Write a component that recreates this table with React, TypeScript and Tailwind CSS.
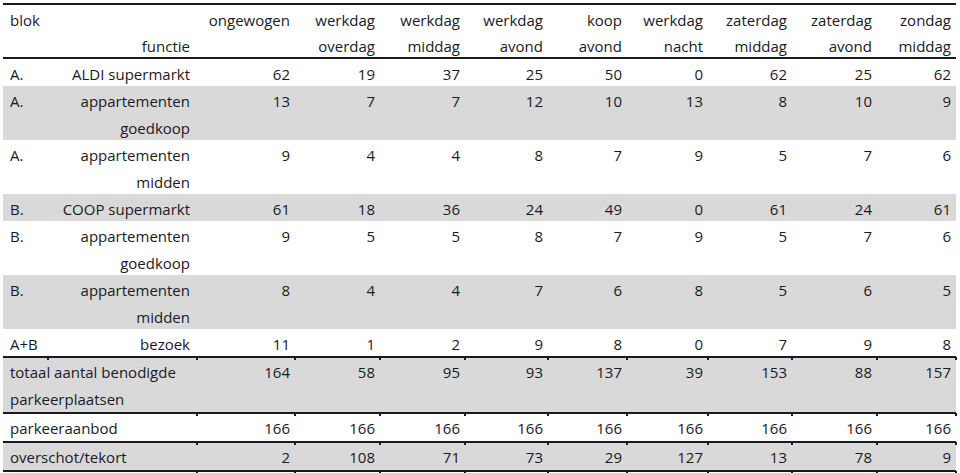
import React from "react";

type Row = { b: string; f: string[]; v: number[]; gray?: boolean; line?: boolean };

const rows: Row[] = [
  { b: "A.", f: ["ALDI supermarkt"], v: [62, 19, 37, 25, 50, 0, 62, 25, 62] },
  { b: "A.", f: ["appartementen", "goedkoop"], v: [13, 7, 7, 12, 10, 13, 8, 10, 9], gray: true },
  { b: "A.", f: ["appartementen", "midden"], v: [9, 4, 4, 8, 7, 9, 5, 7, 6] },
  { b: "B.", f: ["COOP supermarkt"], v: [61, 18, 36, 24, 49, 0, 61, 24, 61], gray: true },
  { b: "B.", f: ["appartementen", "goedkoop"], v: [9, 5, 5, 8, 7, 9, 5, 7, 6] },
  { b: "B.", f: ["appartementen", "midden"], v: [8, 4, 4, 7, 6, 8, 5, 6, 5], gray: true },
  { b: "A+B", f: ["bezoek"], v: [11, 1, 2, 9, 8, 0, 7, 9, 8], line: true },
];

const totals: { label: string[]; v: number[]; gray: boolean }[] = [
  { label: ["totaal aantal benodigde", "parkeerplaatsen"], v: [164, 58, 95, 93, 137, 39, 153, 88, 157], gray: true },
  { label: ["parkeeraanbod"], v: [166, 166, 166, 166, 166, 166, 166, 166, 166], gray: false },
  { label: ["overschot/tekort"], v: [2, 108, 71, 73, 29, 127, 13, 78, 9], gray: true },
];

const headers: [string, string][] = [
  ["ongewogen", ""],
  ["werkdag", "overdag"],
  ["werkdag", "middag"],
  ["werkdag", "avond"],
  ["koop", "avond"],
  ["werkdag", "nacht"],
  ["zaterdag", "middag"],
  ["zaterdag", "avond"],
  ["zondag", "middag"],
];

const widths = [45, 149, 98, 85, 85, 83, 79, 81, 84, 85, 79];

function Tick() {
  return <span className="absolute right-[-1px] bottom-[-4px] w-[2px] h-[3px] bg-[#1a1a24]" />;
}

export default function App() {
  return (
    <div
      className="w-[960px] h-[473px] bg-white text-[#1a1a26] overflow-hidden pt-[3px] pl-[3px]"
      style={{ fontFamily: "'Open Sans', Lato, sans-serif" }}
    >
      <table className="table-fixed border-collapse w-[953px] text-[15px] leading-[27px]">
        <colgroup>
          {widths.map((w, i) => (
            <col key={i} style={{ width: w }} />
          ))}
        </colgroup>
        <thead>
          <tr className="border-t-2 border-b-2 border-[#1a1a24]">
            <td className="pl-[7px] align-top">
              <div className="pt-[2px] leading-[26px]">blok</div>
              <div className="mt-[3px] leading-[21px]">&nbsp;</div>
            </td>
            <td className="text-right pr-[7px] align-top">
              <div className="pt-[2px] leading-[26px]">&nbsp;</div>
              <div className="mt-[3px] leading-[21px]">functie</div>
            </td>
            {headers.map(([a, b], i) => (
              <td key={i} className="text-right pr-[5px] align-top">
                <div className="pt-[2px] leading-[26px]">{a}</div>
                <div className="mt-[3px] leading-[21px]">{b || "\u00a0"}</div>
              </td>
            ))}
          </tr>
        </thead>
        <tbody>
          {rows.map((r, i) => (
            <tr
              key={i}
              className={`${r.gray ? "bg-[#d9d9d9]" : ""} ${r.line ? "border-b-2 border-[#1a1a24]" : ""}`}
            >
              <td className="relative pl-[7px] align-top">
                <div className="translate-y-[2px]">{r.b}</div>
                {r.line && <Tick />}
              </td>
              <td className="relative text-right pr-[7px] align-top">
                <div className="translate-y-[2px]">
                  {r.f.map((t, j) => (
                    <div key={j}>{t}</div>
                  ))}
                </div>
                {r.line && <Tick />}
              </td>
              {r.v.map((n, j) => (
                <td key={j} className="relative text-right pr-[5px] align-top">
                  <div className="translate-y-[2px]">{n}</div>
                  {r.line && <Tick />}
                </td>
              ))}
            </tr>
          ))}
          {totals.map((r, i) => (
            <tr key={i} className={`${r.gray ? "bg-[#d9d9d9]" : ""} border-b-2 border-[#1a1a24]`}>
              <td colSpan={2} className="relative pl-[7px] align-top">
                <div className="translate-y-[1px]">
                  {r.label.map((t, j) => (
                    <div key={j} className="whitespace-nowrap">
                      {t}
                    </div>
                  ))}
                </div>
                <Tick />
              </td>
              {r.v.map((n, j) => (
                <td key={j} className="relative text-right pr-[5px] align-top">
                  <div className="translate-y-[1px]">{n}</div>
                  <Tick />
                </td>
              ))}
            </tr>
          ))}
        </tbody>
      </table>
    </div>
  );
}
